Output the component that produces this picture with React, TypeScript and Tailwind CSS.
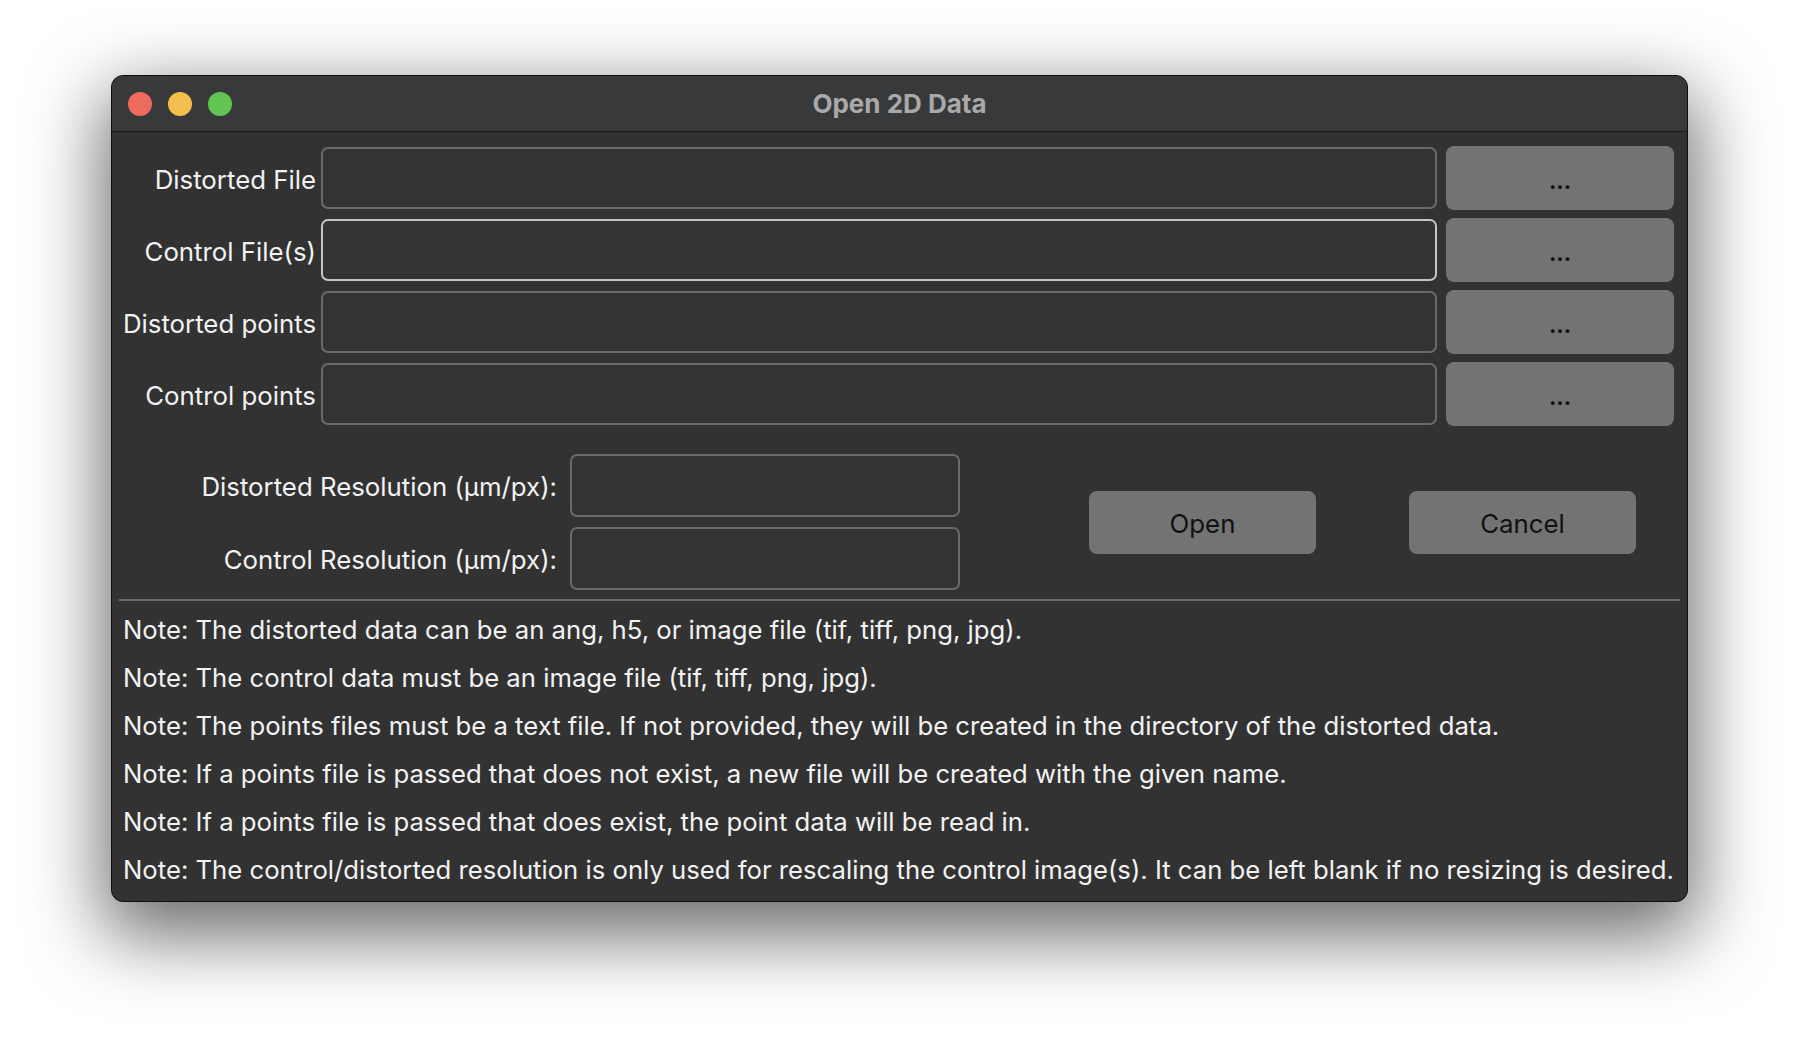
import React from "react";

const FONT = "font-['Inter','Noto_Sans',sans-serif]";

const fileRows = ["Distorted File", "Control File(s)", "Distorted points", "Control points"];

const notes = [
  "Note: The distorted data can be an ang, h5, or image file (tif, tiff, png, jpg).",
  "Note: The control data must be an image file (tif, tiff, png, jpg).",
  "Note: The points files must be a text file. If not provided, they will be created in the directory of the distorted data.",
  "Note: If a points file is passed that does not exist, a new file will be created with the given name.",
  "Note: If a points file is passed that does exist, the point data will be read in.",
  "Note: The control/distorted resolution is only used for rescaling the control image(s). It can be left blank if no resizing is desired.",
];

const FileRow = ({ label, focused }: { label: string; focused?: boolean }) => (
  <div className="flex h-[64px] items-center">
    <div className="w-[204px] shrink-0 pt-[4px] text-right text-[25.8px] text-[#f2f2f2]">{label}</div>
    <div
      className={
        "ml-[5px] h-[62px] flex-1 rounded-[7px] border-2 bg-[#333333] " +
        (focused ? "border-[#c4c4c4]" : "border-[#6a6a6a]")
      }
    />
    <button className="ml-[9px] flex h-[64px] w-[228px] shrink-0 items-center justify-center rounded-[8px] bg-[#737373] pt-[6px] text-[22px] font-bold text-[#111]">
      ...
    </button>
  </div>
);

const ResRow = ({ label }: { label: string }) => (
  <div className="flex h-[63px] items-center">
    <div className="w-[445px] shrink-0 pt-[4px] text-right text-[25.8px] text-[#f2f2f2]">{label}</div>
    <div className="ml-[13px] h-[63px] w-[390px] rounded-[7px] border-2 border-[#6a6a6a] bg-[#333333]" />
  </div>
);

const DialogButton = ({ children, className = "" }) => (
  <button
    className={
      "flex h-[63px] w-[227px] shrink-0 items-center justify-center rounded-[8px] bg-[#737373] pt-[4px] text-[25.8px] text-[#111] " +
      className
    }
  >
    {children}
  </button>
);

export default function App() {
  return (
    <div className={"h-[1050px] w-full bg-white pl-[111px] pt-[75px] " + FONT}>
      <div className="flex h-[827px] w-[1577px] flex-col overflow-hidden rounded-[12px] border border-[#0e0e0e] bg-[#323232] shadow-[0_26px_75px_8px_rgba(0,0,0,0.58)]">
        {/* title bar */}
        <div className="grid h-[56px] shrink-0 grid-cols-[1fr_auto_1fr] items-center border-b border-[#1a1a1a] bg-[#38393b]">
          <div className="flex items-center gap-[16px] pl-[16px]">
            <span className="h-[24px] w-[24px] rounded-full bg-[#ec6a5e]" />
            <span className="h-[24px] w-[24px] rounded-full bg-[#f4bf4f]" />
            <span className="h-[24px] w-[24px] rounded-full bg-[#61c554]" />
          </div>
          <div className="text-[26px] font-bold text-[#a9a9aa]">Open 2D Data</div>
          <div />
        </div>

        {/* file inputs */}
        <div className="flex flex-col gap-[8px] pr-[13px] pt-[14px]">
          {fileRows.map((label, i) => (
            <FileRow key={label} label={label} focused={i === 1} />
          ))}
        </div>

        {/* resolution + actions */}
        <div className="mt-[28px] flex items-center">
          <div className="flex flex-col gap-[10px]">
            <ResRow label="Distorted Resolution (µm/px):" />
            <ResRow label="Control Resolution (µm/px):" />
          </div>
          <DialogButton className="ml-[129px]">Open</DialogButton>
          <DialogButton className="ml-[93px]">Cancel</DialogButton>
        </div>

        <div className="mx-[7px] mt-[9px] h-[2px] bg-[#6a6a6a]" />

        {/* notes */}
        <div className="flex flex-col pl-[11px] pt-[5px]">
          {notes.map((n) => (
            <div key={n} className="h-[48px] whitespace-nowrap text-[25.7px] leading-[48px] text-[#f2f2f2]">
              {n}
            </div>
          ))}
        </div>
      </div>
    </div>
  );
}
